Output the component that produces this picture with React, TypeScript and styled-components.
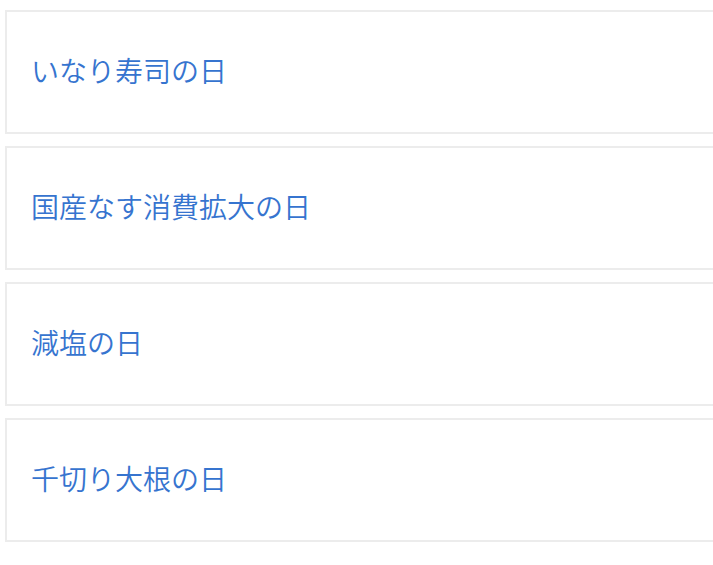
import React from 'react'
import styled, { createGlobalStyle } from 'styled-components'

const GlobalStyle = createGlobalStyle`
  html, body {
    margin: 0;
    padding: 0;
    background: #fff;
    overflow: hidden;
  }
  body {
    font-family: "Noto Sans CJK JP", "Noto Sans", sans-serif;
  }
`

const List = styled.ul`
  list-style: none;
  margin: 0;
  padding: 10px 0 0 5px;
  display: flex;
  flex-direction: column;
  gap: 12px;
`

const Card = styled.li`
  box-sizing: border-box;
  width: 740px;
  height: 124px;
  border: 2px solid #ececec;
  display: flex;
  align-items: center;
  padding: 0 0 4px 24px;
`

const Title = styled.a`
  color: #3674cf;
  font-size: 28px;
  font-weight: 350;
  line-height: 1;
  text-decoration: none;
  white-space: nowrap;
`

const days = ['いなり寿司の日', '国産なす消費拡大の日', '減塩の日', '千切り大根の日']

export default function App() {
  return (
    <>
      <GlobalStyle />
      <List>
        {days.map((d) => (
          <Card key={d}>
            <Title href="#">{d}</Title>
          </Card>
        ))}
      </List>
    </>
  )
}
